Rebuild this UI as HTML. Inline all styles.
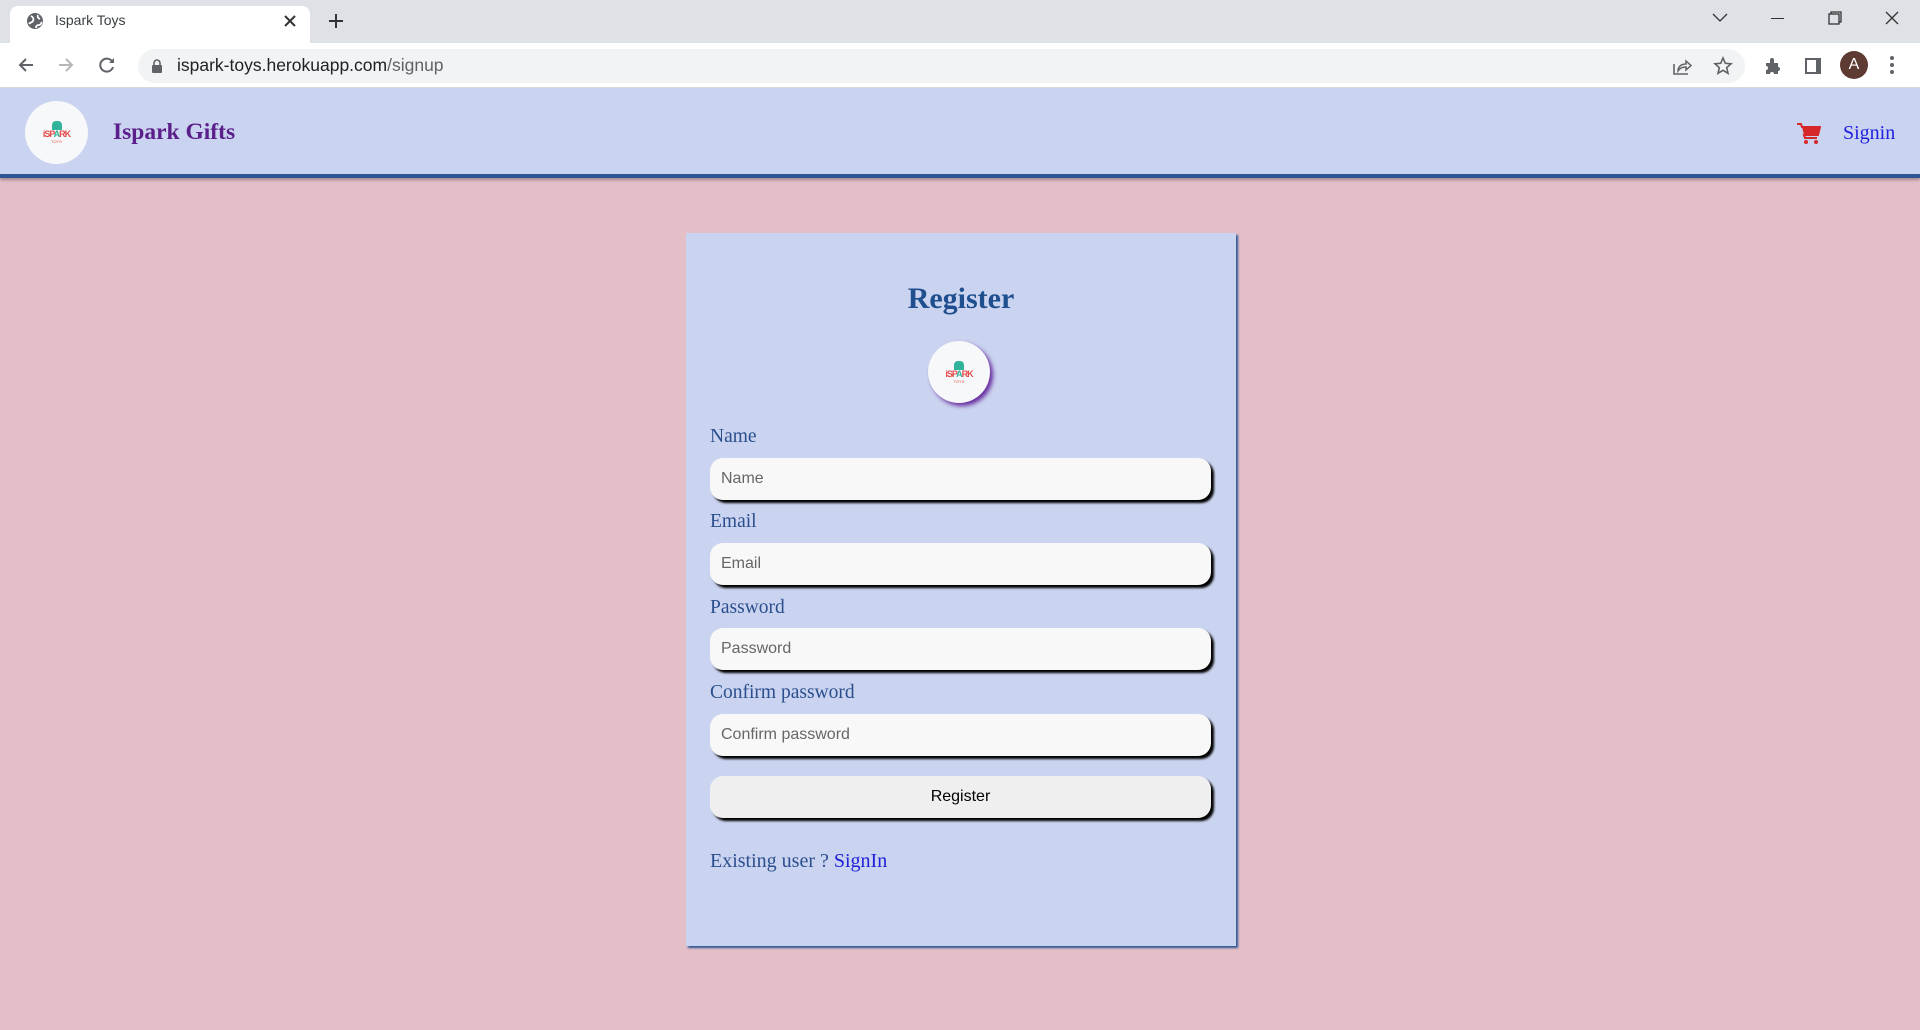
<!DOCTYPE html>
<html><head><meta charset="utf-8"><style>
*{box-sizing:border-box;margin:0;padding:0}
body{width:1920px;height:1030px;overflow:hidden;background:#e4bfc7;font-family:"Liberation Serif",serif;position:relative}
.abs{position:absolute}
#tabbar{left:0;top:0;width:1920px;height:43px;background:#dee1e6}
#tab{left:10px;top:6px;width:300px;height:37px;background:#fff;border-radius:8px 8px 0 0}
#toolbar{left:0;top:43px;width:1920px;height:45px;background:#fff;border-bottom:1px solid #dadce0}
#url{left:138px;top:49px;width:1607px;height:34px;background:#f1f3f4;border-radius:17px}
.sans{font-family:"Liberation Sans",sans-serif}
#hdr{left:0;top:88px;width:1920px;height:90px;background:#cad3ef;border-bottom:4px solid #2d5694;box-shadow:0 2px 3px rgba(0,0,0,.3)}
.logo{background:#f7f8fa;border-radius:50%;display:flex;align-items:center;justify-content:center;flex-direction:column}
#card{left:686px;top:233px;width:550px;height:713px;background:#cad3ef;box-shadow:2px 2px 2px #2d5694}
.lbl{position:absolute;left:24px;font-size:19.5px;color:#2b4f8e}
.inp{position:absolute;left:24px;width:501px;height:42px;background:#f8f8f8;border-radius:13px;box-shadow:3px 3px 2px #000;font-family:"Liberation Sans",sans-serif;font-size:16px;color:#666;padding-left:11px;line-height:42px}
</style></head><body>
<div id="tabbar" class="abs"></div>
<div id="tab" class="abs"></div>
<svg class="abs" style="left:26px;top:12px" width="18" height="18" viewBox="0 0 18 18"><circle cx="9" cy="9" r="8" fill="#5f6368"/><path d="M5 4c2 1 3 3 2 5s-3 1-4 3M12 3c-1 2 0 3 2 4M10 16c0-2 1-3 3-3s2-2 3-3" stroke="#fff" stroke-width="1.8" fill="none"/></svg>
<div class="abs sans" style="left:55px;top:12px;font-size:14px;color:#3c4043">Ispark Toys</div>
<svg class="abs" style="left:283px;top:14px" width="14" height="14"><path d="M2 2L12 12M12 2L2 12" stroke="#333" stroke-width="2"/></svg>
<svg class="abs" style="left:328px;top:13px" width="16" height="16"><path d="M8 1V15M1 8H15" stroke="#333" stroke-width="2"/></svg>
<svg class="abs" style="left:1712px;top:13px" width="16" height="10"><path d="M1 1L8 8L15 1" stroke="#333" stroke-width="1.3" fill="none"/></svg>
<div class="abs" style="left:1771px;top:18px;width:13px;height:1px;background:#333"></div>
<svg class="abs" style="left:1828px;top:11px" width="14" height="14"><rect x="1" y="3" width="10" height="10" fill="none" stroke="#333" stroke-width="1.3"/><path d="M3 3V1H13V11H11" fill="none" stroke="#333" stroke-width="1.3"/></svg>
<svg class="abs" style="left:1885px;top:11px" width="14" height="14"><path d="M1 1L13 13M13 1L1 13" stroke="#333" stroke-width="1.3"/></svg>
<div id="toolbar" class="abs"></div>
<svg class="abs" style="left:17px;top:56px" width="18" height="18"><path d="M16 9H3M9 3L3 9L9 15" stroke="#5f6368" stroke-width="2" fill="none"/></svg>
<svg class="abs" style="left:57px;top:56px" width="18" height="18"><path d="M2 9H15M9 3L15 9L9 15" stroke="#b4b6b8" stroke-width="2" fill="none"/></svg>
<svg class="abs" style="left:98px;top:56px" width="18" height="18"><path d="M14.5 6A6.5 6.5 0 1 0 15 11" stroke="#5f6368" stroke-width="2" fill="none"/><path d="M16 2V7H11Z" fill="#5f6368"/></svg>
<div id="url" class="abs"></div>
<svg class="abs" style="left:151px;top:59px" width="12" height="14"><rect x="1" y="6" width="10" height="8" rx="1" fill="#5f6368"/><path d="M3 6V4a3 3 0 0 1 6 0V6" stroke="#5f6368" stroke-width="1.6" fill="none"/></svg>
<div class="abs sans" style="left:177px;top:55px;font-size:17.5px;color:#202124">ispark-toys.herokuapp.com<span style="color:#5f6368">/signup</span></div>
<svg class="abs" style="left:1672px;top:56px" width="20" height="20"><path d="M2 8V18H16" stroke="#5f6368" stroke-width="1.6" fill="none"/><path d="M6 15C6 10 10 8 14 8V5L19 9.5L14 14V11C10 11 8 12 6 15Z" stroke="#5f6368" stroke-width="1.5" fill="none"/></svg>
<svg class="abs" style="left:1713px;top:56px" width="20" height="20"><path d="M10 2L12.3 7.3L18 7.8L13.7 11.6L15 17.3L10 14.3L5 17.3L6.3 11.6L2 7.8L7.7 7.3Z" stroke="#5f6368" stroke-width="1.6" fill="none"/></svg>
<svg class="abs" style="left:1763px;top:56px" width="20" height="20"><path d="M3 7H7V4a2 2 0 0 1 4 0V7H15V11a2 2 0 0 1 0 4V18H11a2 2 0 0 0-4 0H3V14a2 2 0 0 0 0-4Z" fill="#5f6368"/></svg>
<svg class="abs" style="left:1803px;top:56px" width="20" height="20"><rect x="2" y="2" width="16" height="16" fill="#5f6368"/><rect x="4" y="4" width="9" height="12" fill="#fff"/></svg>
<div class="abs sans" style="left:1840px;top:51px;width:28px;height:28px;border-radius:50%;background:#5d3a32;color:#fff;font-size:16px;text-align:center;line-height:28px">A</div>
<svg class="abs" style="left:1889px;top:55px" width="6" height="20"><circle cx="3" cy="3" r="2" fill="#5f6368"/><circle cx="3" cy="10" r="2" fill="#5f6368"/><circle cx="3" cy="17" r="2" fill="#5f6368"/></svg>

<div id="hdr" class="abs"></div>
<div class="abs logo" style="left:25px;top:101px;width:63px;height:63px">
  <div style="width:10px;height:9px;background:#2fb39a;border-radius:4px 4px 0 0"></div>
  <div class="sans" style="font-size:9px;font-weight:bold;color:#e54b4b;letter-spacing:-1px;line-height:9px">iSP<span style="color:#2fb39a">A</span>RK</div>
  <div class="sans" style="font-size:4px;color:#e54b4b">TOYS</div>
</div>
<div class="abs" style="left:113px;top:119px;font-size:23.5px;font-weight:bold;color:#5a1f8a">Ispark Gifts</div>
<svg class="abs" style="left:1797px;top:123px" width="24" height="22" viewBox="0 0 24 22"><path d="M0 1H4L5 4H23L21 12H7L8 15H20" stroke="#d62828" stroke-width="2" fill="none"/><path d="M5 4H23L21 12H7Z" fill="#d62828"/><circle cx="9" cy="19" r="2" fill="#d62828"/><circle cx="19" cy="19" r="2" fill="#d62828"/></svg>
<div class="abs" style="left:1843px;top:122px;font-size:20px;color:#2020e0">Signin</div>

<div id="card" class="abs">
  <div class="abs" style="left:0;top:49px;width:550px;text-align:center;font-size:30px;font-weight:bold;color:#1f4f8f">Register</div>
  <div class="abs logo" style="left:242px;top:108px;width:62px;height:62px;box-shadow:3px 3px 4px #6a2fa0">
    <div style="width:10px;height:9px;background:#2fb39a;border-radius:4px 4px 0 0"></div>
    <div class="sans" style="font-size:9px;font-weight:bold;color:#e54b4b;letter-spacing:-1px;line-height:9px">iSP<span style="color:#2fb39a">A</span>RK</div>
    <div class="sans" style="font-size:4px;color:#e54b4b">TOYS</div>
  </div>
  <div class="lbl" style="top:193px">Name</div>
  <div class="inp" style="top:225px">Name</div>
  <div class="lbl" style="top:278px">Email</div>
  <div class="inp" style="top:310px">Email</div>
  <div class="lbl" style="top:364px">Password</div>
  <div class="inp" style="top:395px">Password</div>
  <div class="lbl" style="top:449px">Confirm password</div>
  <div class="inp" style="top:481px">Confirm password</div>
  <div class="inp" style="top:543px;background:#efefef;color:#000;text-align:center;padding:0">Register</div>
  <div class="lbl" style="top:617px;font-size:20px">Existing user ? <span style="color:#2020d8">SignIn</span></div>
</div>
</body></html>
